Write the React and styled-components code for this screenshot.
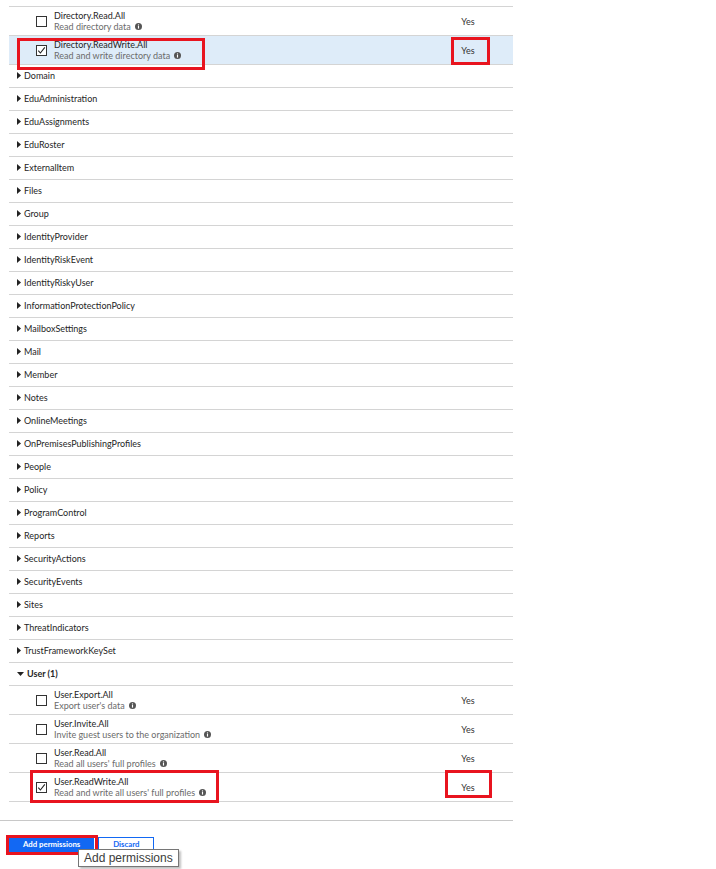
import styled, { createGlobalStyle } from "styled-components";

const GlobalStyle = createGlobalStyle`
  body {
    margin: 0;
    background: #ffffff;
    font-family: Lato, "Open Sans", sans-serif;
    color: #323130;
  }
`;

const Page = styled.div`
  padding-top: 6px;
  width: 716px;
  height: 869px;
  box-sizing: border-box;
  position: relative;
`;

const List = styled.div`
  margin-left: 9px;
  width: 504px;
  border-top: 1px solid #d4d4d4;
`;

const PermRow = styled.div`
  position: relative;
  display: grid;
  grid-template-columns: 1fr 92px;
  align-items: center;
  height: 28px;
  border-bottom: 1px solid #d4d4d4;
  background: ${(p) => (p.$selected ? "#deecf9" : "transparent")};
`;

const PermName = styled.div`
  display: flex;
  align-items: center;
  gap: 7px;
  padding-left: 27px;
`;

const Box = styled.span`
  width: 11px;
  height: 11px;
  box-sizing: border-box;
  border: 1px solid #333;
  background: #fff;
  display: flex;
  align-items: center;
  justify-content: center;
`;

const Texts = styled.div`
  display: flex;
  flex-direction: column;
  line-height: 11px;
  font-size: 9px;
`;

const Title = styled.span`
  color: #252525;
`;

const Desc = styled.span`
  color: #6b6b6b;
  display: flex;
  align-items: center;
  gap: 4px;
`;

const Yes = styled.div`
  font-size: 9px;
  color: #333;
  text-align: center;
  padding-left: 2px;
`;

const GroupRow = styled.div`
  display: flex;
  align-items: center;
  gap: 3px;
  height: 21px;
  padding: 0 0 1px 8px;
  border-bottom: 1px solid #d4d4d4;
  font-size: 9px;
  color: #252525;
  font-weight: ${(p) => (p.$open ? 700 : 400)};
`;

const Highlight = styled.span`
  position: absolute;
  left: ${(p) => p.$left}px;
  top: ${(p) => p.$top}px;
  width: ${(p) => p.$w}px;
  height: ${(p) => p.$h}px;
  border: 3px solid #e8141f;
  box-sizing: border-box;
  pointer-events: none;
`;

const Footer = styled.div`
  margin-top: 18px;
  width: 513px;
  border-top: 1px solid #c8c8c8;
`;

const Actions = styled.div`
  position: relative;
  display: flex;
  gap: 4px;
  padding: 16px 0 0 9px;
`;

const Button = styled.button`
  position: relative;
  height: 15px;
  padding: 0 ${(p) => (p.$primary ? 13 : 14)}px;
  border: 1px solid #1268f3;
  background: ${(p) => (p.$primary ? "#1268f3" : "#fff")};
  color: ${(p) => (p.$primary ? "#fff" : "#1268f3")};
  font-family: Lato, sans-serif;
  font-weight: 700;
  font-size: 7.8px;
  line-height: 13px;
  cursor: pointer;
`;

const Tooltip = styled.div`
  position: absolute;
  left: 78px;
  top: 28px;
  height: 18px;
  padding: 0 5px;
  box-sizing: border-box;
  border: 1px solid #767676;
  background: #fff;
  color: #3b3b3b;
  font-family: "Liberation Sans", Arial, sans-serif;
  font-size: 12px;
  line-height: 16px;
  box-shadow: 2px 2px 2px rgba(0, 0, 0, 0.25);
  white-space: nowrap;
`;

function InfoIcon() {
  return (
    <svg width="7" height="7" viewBox="0 0 10 10">
      <circle cx="5" cy="5" r="5" fill="#555" />
      <rect x="4.2" y="4.2" width="1.6" height="3.8" fill="#fff" />
      <circle cx="5" cy="2.7" r="0.9" fill="#fff" />
    </svg>
  );
}

function Caret({ open }) {
  return open ? (
    <svg width="7" height="4" viewBox="0 0 7 4">
      <path d="M0 0 L7 0 L3.5 4 Z" fill="#222" />
    </svg>
  ) : (
    <svg width="4" height="7" viewBox="0 0 4 7">
      <path d="M0 0 L4 3.5 L0 7 Z" fill="#222" />
    </svg>
  );
}

function Checkbox({ checked }) {
  return (
    <Box>
      {checked && (
        <svg width="9" height="9" viewBox="0 0 9 9">
          <path d="M1.3 4.6 L3.4 7 L7.8 1.4" fill="none" stroke="#222" strokeWidth="1.1" />
        </svg>
      )}
    </Box>
  );
}

function Permission({ name, desc, checked, selected, nameBox, yesBox }) {
  return (
    <PermRow $selected={selected}>
      <PermName>
        <Checkbox checked={checked} />
        <Texts>
          <Title>{name}</Title>
          <Desc>
            {desc}
            <InfoIcon />
          </Desc>
        </Texts>
      </PermName>
      <Yes>Yes</Yes>
      {nameBox && <Highlight {...nameBox} />}
      {yesBox && <Highlight {...yesBox} />}
    </PermRow>
  );
}

const groups = [
  "Domain",
  "EduAdministration",
  "EduAssignments",
  "EduRoster",
  "ExternalItem",
  "Files",
  "Group",
  "IdentityProvider",
  "IdentityRiskEvent",
  "IdentityRiskyUser",
  "InformationProtectionPolicy",
  "MailboxSettings",
  "Mail",
  "Member",
  "Notes",
  "OnlineMeetings",
  "OnPremisesPublishingProfiles",
  "People",
  "Policy",
  "ProgramControl",
  "Reports",
  "SecurityActions",
  "SecurityEvents",
  "Sites",
  "ThreatIndicators",
  "TrustFrameworkKeySet",
];

const userPerms = [
  { name: "User.Export.All", desc: "Export user's data" },
  { name: "User.Invite.All", desc: "Invite guest users to the organization" },
  { name: "User.Read.All", desc: "Read all users' full profiles" },
  {
    name: "User.ReadWrite.All",
    desc: "Read and write all users' full profiles",
    checked: true,
    nameBox: { $left: 21, $top: -3, $w: 189, $h: 33 },
    yesBox: { $left: 436, $top: -3, $w: 47, $h: 28 },
  },
];

export default function App() {
  return (
    <Page>
      <GlobalStyle />
      <List>
        <Permission name="Directory.Read.All" desc="Read directory data" />
        <Permission
          name="Directory.ReadWrite.All"
          desc="Read and write directory data"
          checked
          selected
          nameBox={{ $left: 8, $top: 2, $w: 188, $h: 32 }}
          yesBox={{ $left: 442, $top: 1, $w: 39, $h: 28 }}
        />
        {groups.map((g) => (
          <GroupRow key={g}>
            <Caret />
            {g}
          </GroupRow>
        ))}
        <GroupRow $open>
          <Caret open />
          User (1)
        </GroupRow>
        {userPerms.map((p) => (
          <Permission key={p.name} {...p} />
        ))}
      </List>
      <Footer>
        <Actions>
          <Button $primary>
            Add permissions
            <Highlight $left={-4} $top={-3} $w={92} $h={20} />
          </Button>
          <Button>Discard</Button>
          <Tooltip>Add permissions</Tooltip>
        </Actions>
      </Footer>
    </Page>
  );
}
